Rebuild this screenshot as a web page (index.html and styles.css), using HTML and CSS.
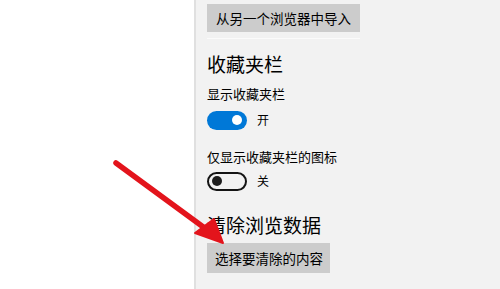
FILE: index.html
```html
<!DOCTYPE html>
<html lang="zh-CN">
<head>
  <meta charset="UTF-8">
  <meta name="viewport" content="width=device-width, initial-scale=1.0">
  <title>设置</title>
  <link rel="stylesheet" href="styles.css">
</head>
<body>
  <div class="page">
    <div class="blank"></div>
    <div class="panel">
      <button class="btn">从另一个浏览器中导入</button>
      <div class="sep"></div>

      <h2 class="title first">收藏夹栏</h2>
      <p class="label">显示收藏夹栏</p>
      <div class="switch-row">
        <span class="switch on"><span class="knob"></span></span>
        <span class="state">开</span>
      </div>

      <p class="label second">仅显示收藏夹栏的图标</p>
      <div class="switch-row off-row">
        <span class="switch off"><span class="knob"></span></span>
        <span class="state">关</span>
      </div>

      <h2 class="title clear">清除浏览数据</h2>
      <button class="btn btn-clear">选择要清除的内容</button>
    </div>
  </div>

  <!-- red pointer arrow drawn over the page -->
  <svg class="arrow" width="500" height="289" viewBox="0 0 500 289">
    <line x1="116" y1="163" x2="206" y2="229" stroke="#e3141c" stroke-width="5.5" stroke-linecap="round"/>
    <polygon points="195,233 223,243 214,219" fill="#e3141c" stroke="#e3141c" stroke-width="2" stroke-linejoin="round"/>
  </svg>
</body>
</html>
```

FILE: styles.css
```css
/* General page */
body {
  margin: 0;
  padding: 0;
  font-family: 'Noto Sans CJK SC', 'Noto Sans', sans-serif;
  color: rgb(0, 0, 0);
  background: white;
  overflow: hidden;
}

.page {
  display: flex;
  height: 289px;
}

.blank {
  width: 194px;
  background: white;
  border-right: 2px solid rgb(224, 224, 224);
}

/* Settings panel */
.panel {
  flex: 1;
  background: rgb(242, 242, 242);
  padding: 4px 0 0 11px;
}

.btn {
  display: block;
  height: 28px;
  padding: 0 9px;
  border: none;
  background: rgb(204, 204, 204);
  font-family: inherit;
  font-size: 13.5px;
  line-height: 28px;
  color: rgb(0, 0, 0);
}

.sep {
  width: 153px;
  height: 1px;
  margin-top: 6px;
  background: rgb(251, 251, 251);
}

.title {
  margin: 13px 0 0;
  font-size: 19px;
  font-weight: normal;
  line-height: 24px;
}

.title.clear {
  margin-top: 22px;
}

.label {
  margin: 9px 0 0;
  font-size: 13px;
  line-height: 18px;
}

.label.second {
  margin-top: 18px;
}

.switch-row {
  display: flex;
  align-items: center;
  gap: 10px;
  margin-top: 7px;
  height: 20px;
}

.switch-row.off-row {
  margin-top: 5px;
}

.switch {
  position: relative;
  box-sizing: border-box;
  width: 40px;
  height: 19px;
  border-radius: 10px;
}

.switch .knob {
  position: absolute;
  top: 50%;
  width: 10px;
  height: 10px;
  margin-top: -5px;
  border-radius: 50%;
}

.switch.on {
  background: rgb(0, 120, 215);
}

.switch.on .knob {
  right: 5px;
  background: white;
}

.switch.off {
  border: 2px solid rgb(20, 20, 20);
}

.switch.off .knob {
  left: 3px;
  background: rgb(30, 30, 30);
}

.state {
  font-size: 12px;
  line-height: 18px;
}

.btn-clear {
  margin-top: 6px;
  height: 30px;
  line-height: 30px;
  padding: 0 7px 0 8px;
}

/* Overlay arrow */
.arrow {
  position: absolute;
  left: 0;
  top: 0;
  pointer-events: none;
}
```
